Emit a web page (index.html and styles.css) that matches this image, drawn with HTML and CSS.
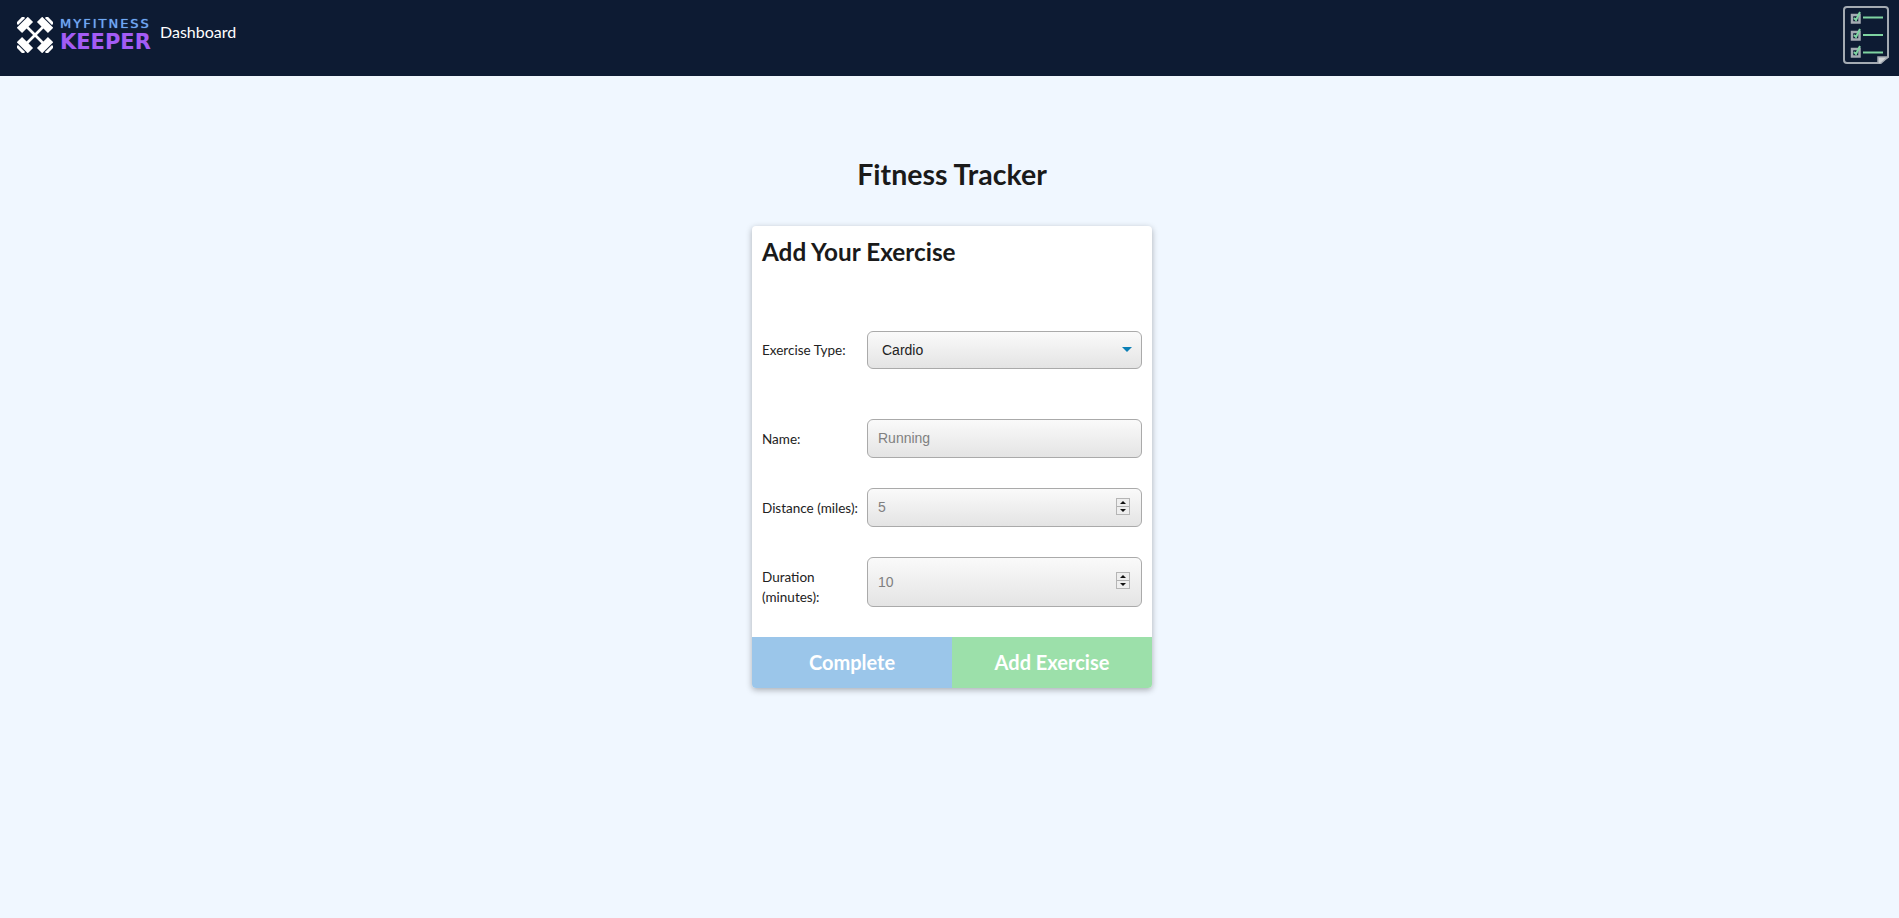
FILE: index.html
```html
<!DOCTYPE html>
<html lang="en">
<head>
<meta charset="utf-8">
<title>Fitness Tracker</title>
<link rel="stylesheet" href="styles.css">
</head>
<body>
<nav class="navbar">
  <a class="brand" href="#">
    <svg class="brand-icon" viewBox="-18 -18 36 36" width="36" height="36" aria-hidden="true">
      <g fill="#fff" transform="rotate(45)">
        <rect x="-12" y="-1.300" width="24" height="2.600"/>
        <rect x="-18" y="-7.800" width="7.500" height="15.600"/>
        <rect x="10.500" y="-7.800" width="7.500" height="15.600"/>
        <rect x="-22" y="-5" width="3" height="10"/>
        <rect x="19" y="-5" width="3" height="10"/>
      </g>
      <g fill="#fff" transform="rotate(-45)">
        <rect x="-12" y="-1.300" width="24" height="2.600"/>
        <rect x="-18" y="-7.800" width="7.500" height="15.600"/>
        <rect x="10.500" y="-7.800" width="7.500" height="15.600"/>
        <rect x="-22" y="-5" width="3" height="10"/>
        <rect x="19" y="-5" width="3" height="10"/>
      </g>
    </svg>
    <span class="brand-text">
      <span class="brand-top">MYFITNESS</span>
      <span class="brand-bottom">KEEPER</span>
    </span>
  </a>
  <a class="nav-link" href="#">Dashboard</a>
  <svg class="nav-icon" viewBox="0 0 46 58" width="46" height="58" aria-hidden="true">
    <path d="M4 1h38a3 3 0 0 1 3 3v47l-9 6H4a3 3 0 0 1-3-3V4a3 3 0 0 1 3-3z" fill="none" stroke="#a4abb3" stroke-width="2"/>
    <path d="M35 51h10l-8 7h-2z" fill="#cfd3d6" stroke="#a4abb3" stroke-width="1.500"/>
    <g fill="none" stroke="#a4abb3" stroke-width="2.500">
      <rect x="9" y="9" width="7.500" height="7.500"/>
      <rect x="9" y="26" width="7.500" height="7.500"/>
      <rect x="9" y="43" width="7.500" height="7.500"/>
    </g>
    <g fill="none" stroke="#7ed3a1" stroke-width="2">
      <path d="M11 12l2 2 4-8M11 29l2 2 4-8M11 46l2 2 4-8"/>
      <path d="M20 11.500h20M20 29h20M20 46.500h20"/>
    </g>
  </svg>
</nav>

<main class="page">
  <h1 class="page-title">Fitness Tracker</h1>
  <section class="card">
    <h2 class="card-title">Add Your Exercise</h2>
    <form class="form">
      <div class="row row-type">
        <label class="label" for="type">Exercise Type:</label>
        <div class="control">
          <select id="type" class="field select">
            <option>Cardio</option>
            <option>Resistance</option>
          </select>
          <span class="caret"></span>
        </div>
      </div>
      <div class="row">
        <label class="label" for="name">Name:</label>
        <div class="control">
          <input id="name" class="field" type="text" placeholder="Running">
        </div>
      </div>
      <div class="row">
        <label class="label" for="distance">Distance (miles):</label>
        <div class="control">
          <input id="distance" class="field" type="text" placeholder="5">
          <span class="spinner"><i class="up"></i><i class="down"></i></span>
        </div>
      </div>
      <div class="row">
        <label class="label label-low" for="duration">Duration (minutes):</label>
        <div class="control">
          <input id="duration" class="field tall" type="text" placeholder="10">
          <span class="spinner"><i class="up"></i><i class="down"></i></span>
        </div>
      </div>
    </form>
    <div class="actions">
      <button class="action blue" type="button">Complete</button>
      <button class="action green" type="button">Add Exercise</button>
    </div>
  </section>
</main>
</body>
</html>
```

FILE: styles.css
```css
* { box-sizing: border-box; }

html, body { height: 100%; }

body {
  margin: 0;
  background: #f0f7ff;
  color: #1a1a1a;
  font-family: Lato, "Open Sans", sans-serif;
  overflow: hidden;
}

.navbar {
  height: 76px;
  background: #0d1b33;
  display: flex;
  align-items: flex-start;
  padding: 0 10px 0 17px;
}

.brand {
  display: flex;
  gap: 7px;
  margin-top: 17px;
  text-decoration: none;
}

.brand-icon { display: block; }

.brand-text {
  display: flex;
  flex-direction: column;
  width: 90px;
}

.brand-top {
  font: 400 13px/13px "DejaVu Sans", sans-serif;
  letter-spacing: 2px;
  color: #6ea8f5;
  text-shadow: 0 0 1px #6ea8f5;
  white-space: nowrap;
}

.brand-bottom {
  font: 700 21px/19px "DejaVu Sans", sans-serif;
  color: #a35cf5;
  margin-top: 3px;
  white-space: nowrap;
}

.nav-link {
  color: #fff;
  font-size: 16px;
  line-height: 20px;
  margin-top: 22px;
  margin-left: 10px;
  text-decoration: none;
}

.nav-icon { margin: 6px 0 0 auto; display: block; }

.page {
  display: flex;
  flex-direction: column;
  align-items: center;
  padding-left: 5px;
}

.page-title {
  margin: 80px 0 0;
  font-size: 28.500px;
  line-height: 36px;
  font-weight: 700;
  text-align: center;
}

.card {
  width: 400px;
  margin-top: 34px;
  background: #fff;
  border-radius: 4px;
  box-shadow: 0 2px 6px rgba(0, 0, 0, .3);
  overflow: hidden;
}

.card-title {
  margin: 0;
  padding: 10px 10px 0;
  font-size: 24.300px;
  line-height: 32px;
  font-weight: 700;
}

.form {
  padding: 63px 10px 30px;
  display: flex;
  flex-direction: column;
  gap: 30px;
}

.row {
  display: flex;
  align-items: center;
}

.row-type { margin-bottom: 20px; }

.label {
  width: 105px;
  flex: none;
  font-size: 13.500px;
  line-height: 20px;
  color: #222;
}

.label-low { padding-top: 9px; }

.control {
  position: relative;
  width: 275px;
}

.field {
  display: block;
  width: 100%;
  height: 39px;
  border: 1px solid #aaa;
  border-radius: 6px;
  background: linear-gradient(#fafafa, #e4e4e4);
  padding: 0 10px 1px;
  font: 14px "Liberation Sans", Arial, sans-serif;
  color: #222;
  outline: 0;
}

.field::placeholder { color: #808080; opacity: 1; }

.tall { height: 50px; }

.select {
  height: 38px;
  appearance: none;
  padding: 0 14px;
}

.caret {
  position: absolute;
  right: 10px;
  top: 16px;
  width: 0;
  height: 0;
  border: 5px solid transparent;
  border-top: 5px solid #0a7fb5;
  border-bottom: 0;
}

.spinner {
  position: absolute;
  right: 12px;
  top: 50%;
  width: 14px;
  height: 17px;
  margin-top: -10px;
  background: #eee;
  border: 1px solid #b5b5b5;
  display: flex;
  flex-direction: column;
}

.spinner i {
  flex: 1;
  position: relative;
  display: block;
}

.spinner .up { border-bottom: 1px solid #b0b0b0; }

.spinner i::after {
  content: "";
  position: absolute;
  left: 3px;
  width: 0;
  height: 0;
  border-left: 3px solid transparent;
  border-right: 3px solid transparent;
}

.spinner .up::after { top: 2px; border-bottom: 3px solid #111; }
.spinner .down::after { top: 2px; border-top: 3px solid #111; }

.actions {
  display: flex;
  height: 51px;
}

.action {
  flex: 1;
  border: 0;
  color: #fff;
  font: 700 20px/1 Lato, sans-serif;
  padding: 0 0 2px;
}

.blue { background: #9bc6ea; }
.green { background: #9ce0aa; }
```
